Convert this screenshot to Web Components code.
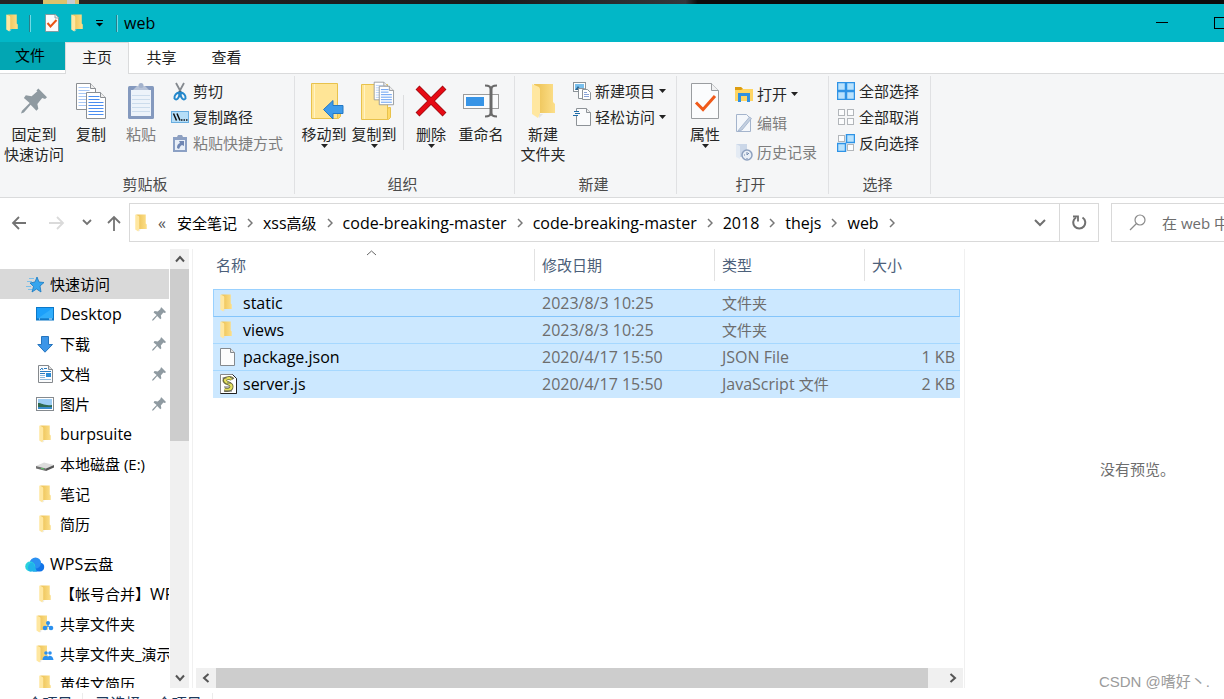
<!DOCTYPE html>
<html lang="zh-CN">
<head>
<meta charset="utf-8">
<meta name="viewport" content="width=device-width, initial-scale=1">
<title>web</title>
<style>
  html, body { margin: 0; height: 100%; overflow: hidden; background: #fff; }
  body { font: 15px/20px "Open Sans", "Noto Sans", "Noto Sans CJK SC", sans-serif; color: #000; }
</style>
</head>
<body>
<explorer-window></explorer-window>

<script>
const BASE = `
  *, *::before, *::after { box-sizing: border-box; }
  [hidden] { display: none !important; }
  [lang=en] { font-size: 16px; }
  button { font: inherit; color: inherit; background: none; border: 0; padding: 0; margin: 0; }
  a { color: inherit; text-decoration: none; }
  ul, ol { list-style: none; margin: 0; padding: 0; }
`;

class Base extends HTMLElement {
  connectedCallback() {
    if (this.shadowRoot) return;
    this.attachShadow({ mode: 'open' }).innerHTML = `<style>${BASE}${this.css()}</style>${this.html()}`;
  }
  css() { return ':host{display:block}'; }
  html() { return '<slot></slot>'; }
}

/* ---------- icons: [width, height, viewBox, markup] ---------- */
const folderArt = `
  <defs><linearGradient id="fb"><stop offset=".2" stop-color="#efc65c"/><stop offset="1" stop-color="#fcdf8a"/></linearGradient></defs>
  <path d="M3 1h19v18l2 2v9H6z" fill="url(#fb)"/>
  <path d="M1 1l7 3 1 2v25l-2 4-6-4z" fill="#ffe7a0"/><path d="M8 31h4l-4 4z" fill="#dcdcdc" opacity=".7"/>`;
const pinArt = `<path d="M18 0l9 9-2 2-3-1-5 6 1 5-2 2-6-6-7 8-3 1 1-3 8-8-6-5 2-3 6 1 6-5-1-1z" fill="#8f9aa1"/>`;
const flatFolder = `
  <path d="M1.500 1.500h26v35h-26z" fill="#ffe596" stroke="#e8c24c"/><path d="M4.500 2v34" stroke="#fff3c4"/>
  <path d="M27.500 36.500v-10l1-2h2v10l-2 2z" fill="#ffd966" stroke="#e8c24c"/>`;
const page = (x, y, w, h, line) => `
  <path d="M${x} ${y}h${w - 5}l5 5v${h - 5}h-${w}z" fill="#fff" stroke="#8b8f93"/>
  <path d="M${x + w - 5} ${y}v5h5" fill="#eee" stroke="#8b8f93"/>
  <path d="M${x + 2} ${y + 4}h${w - 8}M${x + 2} ${y + 7}h${w - 8}M${x + 2} ${y + 10}h${w - 4}M${x + 2} ${y + 13}h${w - 4}M${x + 2} ${y + 16}h${w - 4}M${x + 2} ${y + 19}h${w - 4}${h > 24 ? `M${x + 2} ${y + 22}h${w - 4}` : ''}" stroke="${line}"/>`;
const sq = (x, y, on) => `<rect x="${x + .5}" y="${y + .5}" width="${on ? 8 : 6}" height="${on ? 8 : 6}" fill="${on ? '#b9e2fd' : '#fcfdfe'}" stroke="${on ? '#2e93e6' : '#b2b6ba'}" ${on ? 'stroke-width="1.5"' : ''}/>`;
const ICONS = {
  folder: [12, 18, '1 0 23 36', folderArt],
  folderL: [24, 36, '0 0 24 36', folderArt],
  pinL: [26, 26, '0 0 27 26', pinArt],
  pin: [14, 14, '0 0 27 26', pinArt],
  check: [14, 18, '0 0 28 36', `<path d="M1 1h20l6 6v28H1z" fill="#fbfcfd" stroke="#84888c" stroke-width="1.5"/><path d="M20 1v7h7" fill="#eee" stroke="#84888c" stroke-width="1.5"/><path d="M5 18l6 7L23 12" fill="none" stroke="#ea5414" stroke-width="4"/>`],
  checkL: [30, 38, '0 0 30 38', `<path d="M1.500 1.500h20l7 7v28h-27z" fill="#fbfcfd" stroke="#9a9da0"/><path d="M21.500 1.500v7h7" fill="#f0f1f2" stroke="#9a9da0"/><path d="M6 20.500l7 7L25 14" fill="none" stroke="#f05a1a" stroke-width="3"/>`],
  customize: [9, 8, '0 0 9 8', `<path d="M1 1.500h7" stroke="#000"/><path d="M1 4h7L4.500 7.500z"/>`],
  copyL: [32, 38, '0 0 32 38', page(1.500, 1.500, 19, 26, '#a9c8f5') + page(11.500, 10.500, 19, 26, '#4a8df0')],
  pasteL: [28, 38, '0 0 28 38', `<rect x="1" y="4" width="26" height="33" rx="1.500" fill="#8499be"/><rect x="4" y="8" width="20" height="26" fill="#edf3fa"/><path d="M5 13.500h18M5 17.500h18M5 21.500h18M5 25.500h18M5 29.500h18" stroke="#ccdcec"/><path d="M6 8l4-4h8l4 4z" fill="#b7c3d8"/><circle cx="14" cy="3.500" r="2.500" fill="#a3b2cc"/>`],
  cut: [18, 19, '0 0 18 19', `<path d="M5 1l6 11M13 1L7 12" stroke="#84898f" stroke-width="1.800"/><path d="M8 9l1 3 1-3" fill="#444"/><g fill="none" stroke="#2488cc" stroke-width="2"><path d="M8.500 10.500c-3 0-5.500 3-5 6 2 2.500 5 0 5-6zM9.500 10.500c3 0 5.500 3 5 6-2 2.500-5 0-5-6z"/></g>`],
  path: [18, 12, '0 0 18 12', `<rect x=".5" y=".5" width="17" height="11" fill="#b5def8" stroke="#6aaee0"/><path d="M2.500 2.500l3 7M6 2.500l3 7" stroke="#111" stroke-width="1.500"/><path d="M10 9h1.500M12.500 9H14M15 9h1.500" stroke="#111" stroke-width="1.500"/>`],
  shortcut: [16, 19, '0 0 16 19', `<path d="M1 3h14v15H1z" fill="#8ba0c4"/><path d="M3 6h10v10H3z" fill="#e8eff8"/><path d="M5 3l1-2h4l1 2v2H5z" fill="#8ea0c0"/><path d="M5 14c0-3 1-4 3-5L7 7h5v5l-2-1c-2 1-2 2-3 4z" fill="#6f86b3"/>`],
  moveL: [40, 38, '-6 0 40 38', flatFolder + `<path d="M13.500 27.500l9.500-9v5h10v8H23v5.500z" fill="#3e9bea" stroke="#2478c4"/>`],
  copytoL: [44, 40, '-8 0 44 40', `<g transform="translate(0 2)">${flatFolder}</g>` + `<g transform="translate(13 0) scale(.8)">${page(1.500, 1.500, 17, 22, '#a9c8f5')}</g><g transform="translate(18 4) scale(.84)">${page(1.500, 1.500, 17, 22, '#4a8df0')}</g>`],
  deleteL: [32, 32, '0 0 32 32', `<path d="M2.500 2.500L29.500 29.500M29.500 2.500L2.500 29.500" stroke="#9a0b10" stroke-width="5.500"/><path d="M3 3L29 29M29 3L3 29" stroke="#e60a14" stroke-width="4"/>`],
  renameL: [37, 34, '0 0 37 34', `<rect x=".5" y="10.500" width="35" height="14" fill="#fafbfc" stroke="#9b9b9b"/><rect x="3" y="13" width="18" height="9" fill="#3794e6"/><path d="M28 3v28" stroke="#6a6a6a" stroke-width="3"/><path d="M22 1.500c4 0 6 1 6 4 0-3 2-4 6-4M22 32.500c4 0 6-1 6-4 0 3 2 4 6 4" fill="none" stroke="#6a6a6a" stroke-width="2"/>`],
  newitem: [18, 18, '0 0 18 18', `<rect x=".5" y=".5" width="12" height="9" fill="#fff" stroke="#8d9499"/><path d="M2 2h9v6H2z" fill="#79c0ee"/><path d="M2 8l3-4 3 4z" fill="#2c6792"/><path d="M5.500 6.500h6v10h-6z" fill="#fff" stroke="#8d9499"/><path d="M9.500 7.500h5l3 3v7h-8z" fill="#fff" stroke="#8d9499"/><path d="M11 10.500h3M11 12.500h5M11 14.500h5" stroke="#8aa4d8"/>`],
  easy: [18, 18, '0 0 18 18', `<path d="M3.500.5h10l4 4v13h-14z" fill="#fafbfc" stroke="#8d9297"/><path d="M13.500.5v4h4" fill="#eee" stroke="#8d9297"/><path d="M0 3h7v5H0z" fill="#f5f7f8"/><path d="M1 3.500h5M2 5.500h5M0 7.500h5" stroke="#1f6ba6"/>`],
  open: [18, 17, '0 0 18 17', `<path d="M0 1h6l2 2h10v12H0z" fill="#ffd562"/><path d="M0 1h6l2 2-2 1H0z" fill="#dd9d10"/><path d="M4.500 16V8.500h9V16" fill="none" stroke="#2f90e0" stroke-width="3"/>`],
  edit: [18, 18, '0 0 18 18', `<path d="M1.500.5h10l4 4v13h-14z" fill="#f4f7fb" stroke="#a4b4cc"/><path d="M4 15.500L14.500 3l2 1.500L7 16l-4 1z" fill="#c3cfdf" stroke="#9db0cc" stroke-width=".8"/>`],
  history: [18, 18, '0 0 18 18', `<path d="M1 1h11v13H4z" fill="#cbd7e8"/><path d="M1 1l4 2v13l-4-2z" fill="#e4ebf4"/><circle cx="12" cy="12" r="5" fill="#e9eff6" stroke="#8ea1bf" stroke-width="1.500"/><path d="M12 9v3l2-2M9 12h1M12 15v1" stroke="#7389ad" fill="none"/>`],
  selAll: [18, 18, '0 0 18 18', sq(0, 0, 1) + sq(9, 0, 1) + sq(0, 9, 1) + sq(9, 9, 1)],
  selNone: [18, 18, '0 0 18 18', sq(1, 1) + sq(10, 1) + sq(1, 10) + sq(10, 10)],
  selInv: [18, 18, '0 0 18 18', sq(1, 1) + sq(9, 0, 1) + sq(0, 9, 1) + sq(10, 10)],
  caret: [7, 4, '0 0 7 4', `<path d="M0 0h7L3.500 4z" fill="#222"/>`],
  back: [16, 14, '0 0 16 14', `<path d="M8 1L2 7l6 6M2 7h13" fill="none" stroke="#737373" stroke-width="1.800"/>`],
  forward: [16, 14, '0 0 16 14', `<path d="M8 1l6 6-6 6M14 7H0" fill="none" stroke="#dadada" stroke-width="1.800"/>`],
  up: [14, 16, '0 0 14 16', `<path d="M1 8l6-6 6 6M7 2v14" fill="none" stroke="#737373" stroke-width="1.800"/>`],
  down: [10, 7, '0 0 10 7', `<path d="M1 1l4 4 4-4" fill="none" stroke="#737373" stroke-width="1.800"/>`],
  downL: [12, 8, '0 0 12 8', `<path d="M1 1l5 5 5-5" fill="none" stroke="#707070" stroke-width="2"/>`],
  crumb: [6, 10, '0 0 6 10', `<path d="M1 1l4 4-4 4" fill="none" stroke="#777" stroke-width="1.500"/>`],
  refresh: [15, 16, '0 0 15 16', `<path d="M10.500 2.500a6 6 0 1 1-6.500 0" fill="none" stroke="#707070" stroke-width="2"/><path d="M1 1.500h5v5" fill="none" stroke="#707070" stroke-width="1.800"/>`],
  search: [17, 17, '0 0 17 17', `<circle cx="11" cy="6" r="5" fill="none" stroke="#8a8a8a" stroke-width="1.200"/><path d="M7.500 9.500L1 16" stroke="#8a8a8a" stroke-width="1.200"/>`],
  sort: [11, 6, '0 0 11 6', `<path d="M1 5l4.500-4L10 5" fill="none" stroke="#666"/>`],
  sUp: [10, 8, '0 0 10 8', `<path d="M1 6.500l4-4.500 4 4.500" fill="none" stroke="#555" stroke-width="2"/>`],
  sDown: [10, 8, '0 0 10 8', `<path d="M1 1.500L5 6l4-4.500" fill="none" stroke="#555" stroke-width="2"/>`],
  sLeft: [8, 10, '0 0 8 10', `<path d="M6.500 1L2 5l4.500 4" fill="none" stroke="#555" stroke-width="2"/>`],
  sRight: [8, 10, '0 0 8 10', `<path d="M1.500 1L6 5 1.500 9" fill="none" stroke="#555" stroke-width="2"/>`],
  star: [18, 17, '0 0 18 17', `<path d="M11 1l2 5 5 .5-4 3.500 1 6-4.500-3L6 16l1.500-5.500L4 7l5-1z" fill="#35a5ee" stroke="#1878c2" stroke-width=".8"/><path d="M3 2.500h5M1 5.500h5M0 10.500h5M2 13.500h4" stroke="#7cbfe8"/>`],
  desktop: [18, 14, '0 0 18 14', `<rect x=".5" y=".5" width="17" height="12.500" fill="#1ca0fa" stroke="#0c78c8"/><path d="M1 12L17 1v11z" fill="#31aefb"/><path d="M1 12h16" stroke="#0a66b0"/><path d="M3 12h1M13 12h3" stroke="#cfeaff"/>`],
  download: [16, 17, '0 0 16 17', `<path d="M4.500.5h7v8h4L8 16.200.800 8.500h3.700z" fill="#3d96e8" stroke="#2675be"/>`],
  document: [15, 18, '0 0 15 18', `<path d="M.5.500h10l4 4v13H.5z" fill="#fbfcfd" stroke="#85898d"/><path d="M10.500.500v4h4" fill="#ddd" stroke="#85898d"/><path d="M2 5l2-2 1 2M6 3.500h3M2 6.500h11M2 8.500h5" stroke="#2a7cc0" fill="none"/><path d="M8 8h5v4H8z" fill="#2a8bd6"/><path d="M2 10.500h5M2 12.500h5M2 14.500h11" stroke="#8db9dc"/>`],
  picture: [18, 14, '0 0 18 14', `<rect x=".5" y=".5" width="17" height="13" fill="#fff" stroke="#858a8f"/><path d="M2 2h14v10H2z" fill="#9dcdf4"/><path d="M2 6c4 0 6 3 14 2v2H2z" fill="#2f6a50"/><path d="M2 10h14v2H2z" fill="#3a8ccb"/>`],
  disk: [18, 14, '0 -5 18 14', `<path d="M0 4l8-3.500L18 3l-8 3.500z" fill="#dcdcdc"/><path d="M0 4l10 2.500V9L0 6.500z" fill="#707070"/><path d="M10 6.500L18 3v2.500L10 9z" fill="#555"/><path d="M5 6.300l3 .8" stroke="#5fd06a"/>`],
  cloud: [20, 15, '0 0 20 15', `<path d="M8 14.500h7a4.500 4.500 0 0 0 1-8.800A6 6 0 0 0 5 4.500z" fill="#1173e8"/><circle cx="10.500" cy="6" r="5.500" fill="#2b90f2"/><circle cx="5.200" cy="9.500" r="5" fill="#2ad2dd"/><path d="M5 14.500h7L8 5.500a5 5 0 0 0-3 9z" fill="#20b3ea"/>`],
  share: [18, 18, '0 0 18 18', `<g transform="scale(.5)">${folderArt}</g><g fill="#2b90ee"><circle cx="12" cy="8" r="2"/><circle cx="9" cy="13" r="2.300"/><circle cx="15" cy="13" r="2.300"/></g><path d="M12 8v3l-3 2M12 11l3 2" stroke="#2b90ee" fill="none"/>`],
  people: [18, 18, '0 0 18 18', `<g transform="scale(.5)">${folderArt}</g><g fill="#2b90ee"><circle cx="10" cy="8" r="1.800"/><circle cx="14" cy="8" r="1.800"/><path d="M6.500 15c0-5 5-5 5.500-3 .5-2 5-2 5.500 3z"/></g>`],
  file: [15, 18, '0 0 15 18', `<path d="M.5.500h10l4 4v13H.5z" fill="#fcfcfc" stroke="#85898d"/><path d="M10.500.500v4h4" fill="#e4e4e4" stroke="#85898d"/>`],
  script: [18, 20, '0 0 18 20', `<path d="M.5.500h12l4 4v15H.5z" fill="#fff" stroke="#888"/><path d="M12.500.500l4 4v15H.5" fill="none" stroke="#222"/><path d="M12.500 5.500c-1-2-8-2-8 1s7 2.500 7 6-4 4-7 3" fill="none" stroke="#6c6c3c" stroke-width="4"/><path d="M12 5c-2-1.500-7-1-7 1.500s6.500 2.500 6.500 6-4 3.500-7 3" fill="none" stroke="#e6e25c" stroke-width="2.200"/><path d="M2.500 4h4M10 3l3 2M7 9h4M4 13h5M4 17h8" stroke="#666"/>`],
  min: [12, 12, '0 0 12 12', `<path d="M0 5.500h12" stroke="#000"/>`],
  max: [12, 12, '0 0 12 12', `<rect x=".5" y=".5" width="11" height="11" fill="none" stroke="#000"/>`],
};
class UiIcon extends Base {
  css() { return ':host{display:block;flex:none} svg{display:block}'; }
  html() {
    const [w, h, vb, art] = ICONS[this.getAttribute('name')];
    return `<svg width="${w}" height="${h}" viewBox="${vb}" aria-hidden="true">${art}</svg>`;
  }
}

/* ---------- title bar ---------- */
class TitleBar extends Base {
  css() { return `
    :host { display: flex; align-items: center; height: 38px; background: #02b7c7; padding-left: 6px; overflow: hidden; }
    button { display: grid; place-items: center; height: 38px; }
    .sep { width: 2px; height: 17px; background: linear-gradient(90deg, #2a7f8a 50%, #6fdbe6 50%); }
    .quick { display: flex; align-items: center; gap: 12px; margin: 0 12px 0 14px; }
    h1 { margin: 0 0 0 6px; font-size: 16px; font-weight: 400; line-height: 20px; }
    .controls { display: flex; margin: 0 -25px 0 auto; }
    .controls button { width: 58px; }
    .first { margin-right: 11px; }`; }
  html() { return `
    <ui-icon class="first" name="folder"></ui-icon><span class="sep"></span>
    <div class="quick">
      <button aria-label="属性"><ui-icon name="check"></ui-icon></button>
      <button aria-label="新建文件夹"><ui-icon name="folder"></ui-icon></button>
      <button aria-label="自定义"><ui-icon name="customize"></ui-icon></button>
    </div>
    <span class="sep"></span><h1><slot></slot></h1>
    <div class="controls">
      <button aria-label="最小化"><ui-icon name="min"></ui-icon></button>
      <button aria-label="最大化"><ui-icon name="max"></ui-icon></button>
    </div>`; }
}

class RibbonTabs extends Base {
  css() { return `
    :host { display: flex; align-items: flex-start; height: 32px; border-bottom: 1px solid #dadbdc; }
    button { width: 65px; height: 31px; padding-bottom: 2px; color: #222; }
    .file { height: 28px; background: #02a6b3; color: #000; padding-right: 5px; }
    .on { width: 64px; height: 32px; padding-bottom: 4px; background: #f5f6f7; border: 1px solid #dadbdc; border-bottom: 0; }`; }
  html() { return `
    <button class="file">文件</button><button class="on" aria-current="page">主页</button>
    <button>共享</button><button>查看</button>`; }
}

/* ---------- ribbon ---------- */
class RibbonGroup extends Base {
  css() { return `
    :host { display: flex; flex-direction: column; justify-content: space-between; border-right: 1px solid #e0e1e3; }
    .body { display: flex; align-items: flex-start; padding: var(--inset); }
    .name { text-align: center; color: #4a4a4a; line-height: 20px; padding-right: 4px; }`; }
  html() { return `<div class="body"><slot></slot></div><div class="name">${this.getAttribute('name')}</div>`; }
}
class RibbonButton extends Base {
  css() { return `
    :host { display: block; flex: none; width: 50px; color: #262626; }
    :host([disabled]) { color: #7d7d7d; }
    button { display: flex; flex-direction: column; align-items: center; width: 100%; padding-top: 5px; line-height: 20px; white-space: nowrap; text-align: center; }
    .art { display: grid; place-items: center; height: 40px; margin-bottom: 3px; }
    :host([small]) { width: auto; }
    :host([small]) button { flex-direction: row; gap: 4px; height: 26px; padding: 0; }
    :host([small]) .art { width: 18px; height: 18px; margin: 0; }`; }
  html() {
    const off = this.hasAttribute('disabled') ? 'disabled' : '';
    return `<button ${off}><span class="art"><ui-icon name="${this.getAttribute('icon')}"></ui-icon></span>
      <span><slot></slot></span>${this.hasAttribute('menu') ? '<ui-icon name="caret"></ui-icon>' : ''}</button>`;
  }
}
class RibbonBar extends Base {
  css() { return `
    :host { display: flex; height: 124px; padding: 2px 0 3px; background: #f5f6f7; border-bottom: 1px solid #dadbdc; overflow: hidden; }
    .stack { display: flex; flex-direction: column; padding: 2px 0 0 5px; }
    .roomy { gap: 3px; padding-top: 5px; }
    .rule { width: 1px; height: 55px; margin: 19px 2px 0 4px; background: #dcdddf; }
    .wide { width: 68px; } .mid { width: 46px; } .paste { width: 54px; }
    .g1 { --inset: 0 11px 0 0; } .g1 .stack { padding-left: 3px; }
    .g2 { --inset: 0 8px 0 4px; } .g3 { --inset: 0 10px 0 3px; } .g4 { --inset: 0 11px 0 3px; } .g5 { --inset: 0 11px 0 3px; }`; }
  html() { return `
    <ribbon-group class="g1" name="剪贴板">
      <ribbon-button class="wide" icon="pinL">固定到<br>快速访问</ribbon-button>
      <ribbon-button class="mid" icon="copyL">复制</ribbon-button>
      <ribbon-button class="paste" icon="pasteL" disabled>粘贴</ribbon-button>
      <div class="stack">
        <ribbon-button small icon="cut">剪切</ribbon-button>
        <ribbon-button small icon="path">复制路径</ribbon-button>
        <ribbon-button small icon="shortcut" disabled>粘贴快捷方式</ribbon-button>
      </div>
    </ribbon-group>
    <ribbon-group class="g2" name="组织">
      <ribbon-button icon="moveL" menu>移动到</ribbon-button>
      <ribbon-button icon="copytoL" menu>复制到</ribbon-button>
      <span class="rule"></span>
      <ribbon-button icon="deleteL" menu>删除</ribbon-button>
      <ribbon-button icon="renameL">重命名</ribbon-button>
    </ribbon-group>
    <ribbon-group class="g3" name="新建">
      <ribbon-button icon="folderL">新建<br>文件夹</ribbon-button>
      <div class="stack">
        <ribbon-button small icon="newitem" menu>新建项目</ribbon-button>
        <ribbon-button small icon="easy" menu>轻松访问</ribbon-button>
      </div>
    </ribbon-group>
    <ribbon-group class="g4" name="打开">
      <ribbon-button icon="checkL" menu>属性</ribbon-button>
      <div class="stack roomy">
        <ribbon-button small icon="open" menu>打开</ribbon-button>
        <ribbon-button small icon="edit" disabled>编辑</ribbon-button>
        <ribbon-button small icon="history" disabled>历史记录</ribbon-button>
      </div>
    </ribbon-group>
    <ribbon-group class="g5" name="选择">
      <div class="stack">
        <ribbon-button small icon="selAll">全部选择</ribbon-button>
        <ribbon-button small icon="selNone">全部取消</ribbon-button>
        <ribbon-button small icon="selInv">反向选择</ribbon-button>
      </div>
    </ribbon-group>`; }
}

/* ---------- address bar ---------- */
class AddressBar extends Base {
  css() { return `
    :host { display: flex; height: 51px; padding: 5px 0 7px; overflow: hidden; }
    button { display: grid; place-items: center; height: 39px; flex: none; }
    .b { width: 38px; } .r { width: 22px; } .u { width: 31px; }
    .box { display: flex; align-items: center; flex: 1; min-width: 0; height: 39px; border: 1px solid #d9d9d9; margin-right: 12px; }
    .box > ui-icon { margin: 0 11px 0 5px; }
    nav { flex: 1; min-width: 0; overflow: hidden; }
    ol { display: flex; white-space: nowrap; line-height: 24px; }
    li { display: flex; align-items: center; }
    li ui-icon { margin: 0 10px; }
    .more { color: #555; margin-right: 11px; }
    .box button { width: 38px; height: 37px; }
    .box .refresh { border-left: 1px solid #d9d9d9; width: 39px; }
    label { display: flex; align-items: center; flex: none; width: 113px; height: 39px; border: 1px solid #d9d9d9; border-right: 0; padding-left: 17px; gap: 16px; overflow: hidden; }
    input { font: inherit; flex: none; width: 140px; border: 0; padding: 0; outline: 0; background: none; }
    input::placeholder { color: #6d6d6d; opacity: 1; }`; }
  html() {
    const crumbs = ['安全笔记', '<span lang="en">xss</span>高级', 'code-breaking-master', 'code-breaking-master', '2018', 'thejs', 'web'];
    return `
    <button class="b" aria-label="后退"><ui-icon name="back"></ui-icon></button>
    <button class="b" aria-label="前进"><ui-icon name="forward"></ui-icon></button>
    <button class="r" aria-label="最近"><ui-icon name="down"></ui-icon></button>
    <button class="u" aria-label="上移"><ui-icon name="up"></ui-icon></button>
    <div class="box">
      <ui-icon name="folder"></ui-icon>
      <nav><ol><li class="more"><span lang="en">«</span></li>${crumbs.map((c, i) => `<li><a href="#"${i > 1 ? ' lang="en"' : ''}>${c}</a><ui-icon name="crumb"></ui-icon></li>`).join('')}</ol></nav>
      <button aria-label="历史"><ui-icon name="downL"></ui-icon></button>
      <button class="refresh" aria-label="刷新"><ui-icon name="refresh"></ui-icon></button>
    </div>
    <label><ui-icon name="search"></ui-icon><input type="text" aria-label="搜索" placeholder="在 web 中搜索"></label>`; }
}

class ScrollBar extends Base {
  css() { return `
    :host { display: flex; flex-direction: column; background: #f0f0f0; width: 19px; }
    button { display: grid; place-items: center; flex: none; height: 20px; }
    .thumb { background: #cdcdcd; }
    :host([horizontal]) { flex-direction: row; width: auto; height: 20px; }
    :host([horizontal]) button { width: 20px; }`; }
  html() {
    const h = this.hasAttribute('horizontal');
    const [a, b] = this.getAttribute('ratio').split(':');
    return `<button aria-label="向前"><ui-icon name="${h ? 'sLeft' : 'sUp'}"></ui-icon></button>
      <div class="thumb" style="flex:${a}"></div><div style="flex:${b}"></div>
      <button aria-label="向后"><ui-icon name="${h ? 'sRight' : 'sDown'}"></ui-icon></button>`;
  }
}

/* ---------- navigation tree ---------- */
class NavItem extends Base {
  css() { return `
    :host { display: block; }
    a { display: flex; align-items: center; height: 30px; padding-left: 35px; gap: 5px; white-space: nowrap; overflow: hidden; }
    .art { display: grid; place-items: center; flex: none; width: 20px; }
    .pin { margin: 0 3px 0 auto; }
    :host([root]) a { padding-left: 25px; }
    :host([selected]) a { background: #d9d9d9; }`; }
  html() { return `<a href="#"><span class="art"><ui-icon name="${this.getAttribute('icon')}"></ui-icon></span>
    <span><slot></slot></span>${this.hasAttribute('pinned') ? '<ui-icon class="pin" name="pin"></ui-icon>' : ''}</a>`; }
}
class NavTree extends Base {
  css() { return `
    :host { display: flex; min-height: 0; overflow: hidden; border-right: 1px solid #f0f0f0; padding-right: 3px; }
    nav { flex: 1; min-width: 0; padding-top: 20px; margin-right: 1px; overflow: hidden; }
    .gap { margin-top: 10px; }`; }
  html() { return `<nav>
      <nav-item root selected icon="star">快速访问</nav-item>
      <nav-item pinned icon="desktop"><span lang="en">Desktop</span></nav-item>
      <nav-item pinned icon="download">下载</nav-item>
      <nav-item pinned icon="document">文档</nav-item>
      <nav-item pinned icon="picture">图片</nav-item>
      <nav-item icon="folder"><span lang="en">burpsuite</span></nav-item>
      <nav-item icon="disk">本地磁盘 (E:)</nav-item>
      <nav-item icon="folder">笔记</nav-item>
      <nav-item icon="folder">简历</nav-item>
      <nav-item class="gap" root icon="cloud"><span lang="en">WPS</span>云盘</nav-item>
      <nav-item icon="folder">【帐号合并】<span lang="en">WP</span></nav-item>
      <nav-item icon="share">共享文件夹</nav-item>
      <nav-item icon="people">共享文件夹_演示</nav-item>
      <nav-item icon="folder">黄佳文简历</nav-item>
    </nav><scroll-bar ratio="172:227"></scroll-bar>`; }
}

/* ---------- file list ---------- */
class FileList extends Base {
  css() { return `
    :host { display: flex; flex-direction: column; justify-content: space-between; min-width: 0; min-height: 0; padding-right: 1px; border-right: 1px solid #f0f0f0; }
    .main { position: relative; padding: 0 3px 0 20px; }
    .sort { position: absolute; top: 1px; left: 173px; }
    table { width: 100%; table-layout: fixed; border-collapse: separate; border-spacing: 0; }
    th { height: 40px; padding: 0 0 8px 7px; text-align: left; font-weight: 400; line-height: 32px; color: #4c607a;
         background: linear-gradient(#e2e2e2, #e2e2e2) right top / 1px 32px no-repeat; }
    th:first-child { padding-left: 3px; } th:last-child { background: none; }
    .date { width: 180px; } .type { width: 150px; } .size { width: 95px; }
    td { height: 27px; padding: 0 0 0 7px; line-height: 24px; color: #6d6d6d; background: #cce8ff; border-bottom: 1px solid #a6d8ff; white-space: nowrap; overflow: hidden; }
    tbody tr:first-child td { height: 28px; border-top: 1px solid #99d1ff; border-bottom-color: #84c5fb; }
    tbody tr:first-child td:first-child { border-left: 1px solid #99d1ff; padding-left: 6px; }
    tbody tr:first-child td:last-child { border-right: 1px solid #99d1ff; }
    tbody tr:last-child td { border-bottom-color: #cce8ff; }
    td:last-child { text-align: right; padding-right: 5px; }
    td a { display: flex; align-items: center; color: #000; gap: 5px; }
    .art { display: grid; width: 18px; justify-items: start; }
    scroll-bar { margin-left: 3px; }`; }
  html() {
    const rows = [
      ['folder', 'static', '2023/8/3 10:25', '文件夹', ''],
      ['folder', 'views', '2023/8/3 10:25', '文件夹', ''],
      ['file', 'package.json', '2020/4/17 15:50', '<span lang="en">JSON File</span>', '1 KB'],
      ['script', 'server.js', '2020/4/17 15:50', '<span lang="en">JavaScript </span>文件', '2 KB'],
    ];
    return `<div class="main"><ui-icon class="sort" name="sort"></ui-icon><table>
      <thead><tr><th>名称</th><th class="date">修改日期</th><th class="type">类型</th><th class="size">大小</th></tr></thead>
      <tbody>${rows.map(r => `<tr><td><a href="#" lang="en"><span class="art"><ui-icon name="${r[0]}"></ui-icon></span>${r[1]}</a></td>
        <td lang="en">${r[2]}</td><td>${r[3]}</td><td lang="en">${r[4]}</td></tr>`).join('')}</tbody></table></div>
      <scroll-bar horizontal ratio="712:15"></scroll-bar>`;
  }
}

class PreviewPane extends Base {
  css() { return `:host { display: grid; place-items: center; padding-left: 86px; color: #6d6d6d; }`; }
}
class StatusBar extends Base {
  css() { return `
    :host { display: flex; align-items: center; height: 30px; padding-left: 15px; color: #1e395b; }
    span { padding-right: 10px; margin-right: 12px; border-right: 1px solid #ececec; }`; }
  html() { return `<span>4 个项目</span><span>已选择 4 个项目</span>`; }
}

class ExplorerWindow extends Base {
  css() { return `
    /* the status bar runs 19px past the lower edge of the screen */
    :host { display: flex; flex-direction: column; height: calc(100vh + 19px); position: relative; }
    .behind { height: 4px; flex: none; padding-left: 43px; background: linear-gradient(90deg, #262424, #191b1c 40%, #34373b 56%, #0c0c0c 57%); }
    .behind::before { content: ""; display: block; width: 36px; height: 4px; background: linear-gradient(90deg, #dcc26c 66%, #c9ccd0 66%, #c9ccd0 90%, #dcc26c 90%); }
    title-bar, ribbon-tabs, ribbon-bar, address-bar, status-bar { flex: none; }
    main { flex: 1; min-height: 0; display: grid; grid-template-columns: 193px minmax(0, 1fr) 259px; grid-template-rows: minmax(0, 1fr); }
    .mark { position: absolute; right: 14px; bottom: 26px; color: #9b9b9b; font: 15px/20px "Liberation Sans", "Noto Sans CJK SC", sans-serif; }`; }
  html() { return `
    <div class="behind"></div>
    <title-bar>web</title-bar>
    <ribbon-tabs></ribbon-tabs>
    <ribbon-bar></ribbon-bar>
    <address-bar></address-bar>
    <main><nav-tree></nav-tree><file-list></file-list><preview-pane>没有预览。</preview-pane></main>
    <status-bar></status-bar>
    <span class="mark">CSDN @嗜好丶.</span>`; }
}

Object.entries({
  'ui-icon': UiIcon, 'title-bar': TitleBar, 'ribbon-tabs': RibbonTabs, 'ribbon-group': RibbonGroup,
  'ribbon-button': RibbonButton, 'ribbon-bar': RibbonBar, 'address-bar': AddressBar, 'scroll-bar': ScrollBar,
  'nav-item': NavItem, 'nav-tree': NavTree, 'file-list': FileList, 'preview-pane': PreviewPane,
  'status-bar': StatusBar, 'explorer-window': ExplorerWindow,
}).forEach(([tag, cls]) => customElements.define(tag, cls));
</script>
</body>
</html>
